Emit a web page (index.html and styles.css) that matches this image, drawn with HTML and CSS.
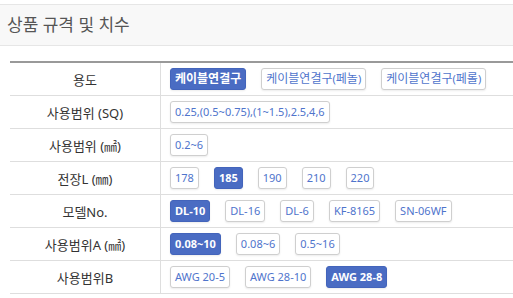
FILE: index.html
```html
<!DOCTYPE html>
<html lang="ko">
<head>
<meta charset="utf-8">
<link rel="stylesheet" href="styles.css">
</head>
<body>
<div class="section-head">상품 규격 및 치수</div>
<div class="spec-wrap">
  <table class="spec">
    <tr>
      <th>용도</th>
      <td><div class="opts"><span class="opt on"><span class="ko">케이블연결구</span></span><span class="opt"><span class="ko">케이블연결구</span>(<span class="ko">페놀</span>)</span><span class="opt"><span class="ko">케이블연결구</span>(<span class="ko">페롤</span>)</span></div></td>
    </tr>
    <tr>
      <th>사용범위 (SQ)</th>
      <td><div class="opts"><span class="opt">0.25,(0.5~0.75),(1~1.5),2.5,4,6</span></div></td>
    </tr>
    <tr>
      <th>사용범위 (㎟)</th>
      <td><div class="opts"><span class="opt">0.2~6</span></div></td>
    </tr>
    <tr>
      <th>전장L (㎜)</th>
      <td><div class="opts"><span class="opt">178</span><span class="opt on">185</span><span class="opt">190</span><span class="opt">210</span><span class="opt">220</span></div></td>
    </tr>
    <tr>
      <th>모델No.</th>
      <td><div class="opts"><span class="opt on">DL-10</span><span class="opt">DL-16</span><span class="opt">DL-6</span><span class="opt">KF-8165</span><span class="opt">SN-06WF</span></div></td>
    </tr>
    <tr>
      <th>사용범위A (㎟)</th>
      <td><div class="opts"><span class="opt on">0.08~10</span><span class="opt">0.08~6</span><span class="opt">0.5~16</span></div></td>
    </tr>
    <tr>
      <th>사용범위B</th>
      <td><div class="opts"><span class="opt">AWG 20-5</span><span class="opt">AWG 28-10</span><span class="opt on">AWG 28-8</span></div></td>
    </tr>
  </table>
</div>
</body>
</html>
```
FILE: styles.css
```css
html, body {
  margin: 0;
  padding: 0;
  background: #fff;
  font-family: "Noto Sans", "Noto Sans CJK KR", sans-serif;
}

.section-head {
  margin-top: 4px;
  height: 40px;
  line-height: 40px;
  padding-left: 7px;
  background: #f8f8f8;
  border-top: 1px solid #e6e6e6;
  border-bottom: 1px solid #e6e6e6;
  font-size: 17px;
  color: #555;
}

.spec-wrap {
  padding-left: 10px;
  margin-top: 15px;
}

.spec {
  width: 100%;
  border-collapse: collapse;
  border-top: 2px solid #999;
}

.spec th,
.spec td {
  border-bottom: 1px solid #dedede;
  height: 32px;
  padding: 0;
  vertical-align: middle;
}

.spec th {
  width: 150px;
  font-weight: normal;
  font-size: 13px;
  color: #333;
  text-align: center;
  border-right: 1px solid #dedede;
}

.spec td {
  padding: 0 10px 0 9px;
}

.opts {
  display: flex;
  gap: 15px;
  align-items: center;
}

.opt {
  display: inline-block;
  box-sizing: border-box;
  height: 22px;
  line-height: 20px;
  padding: 0 4px;
  border: 1px solid #cfcfcf;
  border-radius: 3px;
  box-shadow: 0 1px 2px rgba(0, 0, 0, 0.08);
  font-size: 11px;
  color: #4f74cc;
  background: #fff;
  white-space: nowrap;
}

.opt .ko {
  font-size: 12px;
}

.opt.on {
  background: #4a6cc3;
  border-color: #4364bb;
  color: #fff;
  font-weight: bold;
}
```
